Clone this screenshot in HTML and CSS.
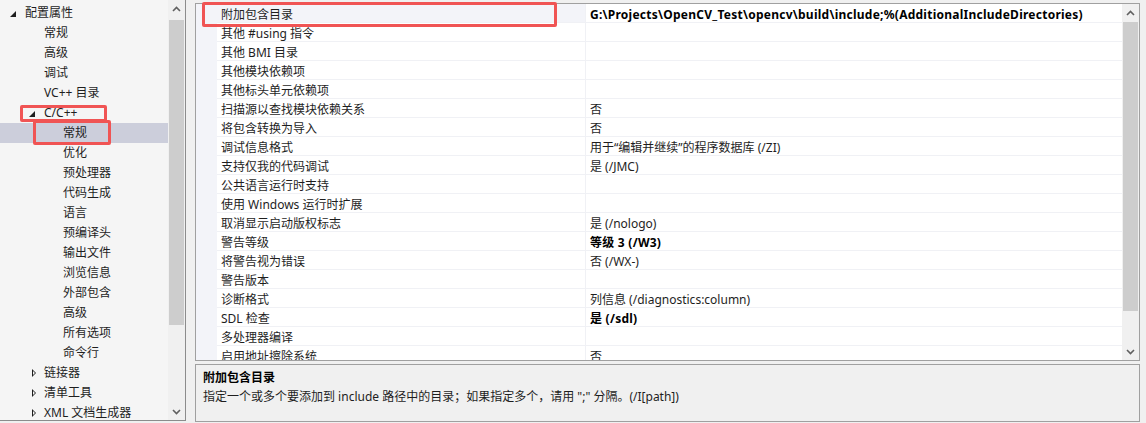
FILE: index.html
```html
<!DOCTYPE html>
<html lang="zh-CN">
<head>
    <meta charset="UTF-8">
    <title>C/C++ 常规</title>
    <link rel="stylesheet" href="styles.css">
</head>
<body>
    <div class="page">
        <div class="tree-panel">
            <div class="tree">
                <div class="node lv0"><span class="tog open"></span>配置属性</div>
                <div class="node lv1"><span class="tog"></span>常规</div>
                <div class="node lv1"><span class="tog"></span>高级</div>
                <div class="node lv1"><span class="tog"></span>调试</div>
                <div class="node lv1"><span class="tog"></span>VC++ 目录</div>
                <div class="node lv1"><span class="tog open"></span>C/C++</div>
                <div class="node lv2 sel"><span class="tog"></span>常规</div>
                <div class="node lv2"><span class="tog"></span>优化</div>
                <div class="node lv2"><span class="tog"></span>预处理器</div>
                <div class="node lv2"><span class="tog"></span>代码生成</div>
                <div class="node lv2"><span class="tog"></span>语言</div>
                <div class="node lv2"><span class="tog"></span>预编译头</div>
                <div class="node lv2"><span class="tog"></span>输出文件</div>
                <div class="node lv2"><span class="tog"></span>浏览信息</div>
                <div class="node lv2"><span class="tog"></span>外部包含</div>
                <div class="node lv2"><span class="tog"></span>高级</div>
                <div class="node lv2"><span class="tog"></span>所有选项</div>
                <div class="node lv2"><span class="tog"></span>命令行</div>
                <div class="node lv1"><span class="tog closed"></span>链接器</div>
                <div class="node lv1"><span class="tog closed"></span>清单工具</div>
                <div class="node lv1"><span class="tog closed"></span>XML 文档生成器</div>
            </div>
            <div class="vscroll tree-scroll">
                <div class="arrow"><svg width="9" height="6" viewBox="0 0 9 6"><polyline points="1,5 4.5,1.5 8,5" /></svg></div>
                <div class="track"><div class="thumb"></div></div>
                <div class="arrow"><svg width="9" height="6" viewBox="0 0 9 6"><polyline points="1,1 4.5,4.5 8,1" /></svg></div>
            </div>
        </div>

        <div class="right">
            <div class="grid">
                <div class="rows">
                    <div class="row sel"><div class="gutter"></div><div class="name">附加包含目录</div><div class="val b">G:\Projects\OpenCV_Test\opencv\build\include;%(AdditionalIncludeDirectories)</div></div>
                    <div class="row"><div class="gutter"></div><div class="name">其他 #using 指令</div><div class="val"></div></div>
                    <div class="row"><div class="gutter"></div><div class="name">其他 BMI 目录</div><div class="val"></div></div>
                    <div class="row"><div class="gutter"></div><div class="name">其他模块依赖项</div><div class="val"></div></div>
                    <div class="row"><div class="gutter"></div><div class="name">其他标头单元依赖项</div><div class="val"></div></div>
                    <div class="row"><div class="gutter"></div><div class="name">扫描源以查找模块依赖关系</div><div class="val">否</div></div>
                    <div class="row"><div class="gutter"></div><div class="name">将包含转换为导入</div><div class="val">否</div></div>
                    <div class="row"><div class="gutter"></div><div class="name">调试信息格式</div><div class="val">用于“编辑并继续”的程序数据库 (/ZI)</div></div>
                    <div class="row"><div class="gutter"></div><div class="name">支持仅我的代码调试</div><div class="val">是 (/JMC)</div></div>
                    <div class="row"><div class="gutter"></div><div class="name">公共语言运行时支持</div><div class="val"></div></div>
                    <div class="row"><div class="gutter"></div><div class="name">使用 Windows 运行时扩展</div><div class="val"></div></div>
                    <div class="row"><div class="gutter"></div><div class="name">取消显示启动版权标志</div><div class="val">是 (/nologo)</div></div>
                    <div class="row"><div class="gutter"></div><div class="name">警告等级</div><div class="val b">等级 3 (/W3)</div></div>
                    <div class="row"><div class="gutter"></div><div class="name">将警告视为错误</div><div class="val">否 (/WX-)</div></div>
                    <div class="row"><div class="gutter"></div><div class="name">警告版本</div><div class="val"></div></div>
                    <div class="row"><div class="gutter"></div><div class="name">诊断格式</div><div class="val">列信息 (/diagnostics:column)</div></div>
                    <div class="row"><div class="gutter"></div><div class="name">SDL 检查</div><div class="val b">是 (/sdl)</div></div>
                    <div class="row"><div class="gutter"></div><div class="name">多处理器编译</div><div class="val"></div></div>
                    <div class="row"><div class="gutter"></div><div class="name">启用地址擦除系统</div><div class="val">否</div></div>
                </div>
                <div class="vscroll grid-scroll">
                    <div class="arrow"><svg width="9" height="6" viewBox="0 0 9 6"><polyline points="1,5 4.5,1.5 8,5" /></svg></div>
                    <div class="track"><div class="thumb"></div></div>
                    <div class="arrow"><svg width="9" height="6" viewBox="0 0 9 6"><polyline points="1,1 4.5,4.5 8,1" /></svg></div>
                </div>
            </div>
            <div class="desc">
                <div class="desc-title">附加包含目录</div>
                <div class="desc-text">指定一个或多个要添加到 include 路径中的目录；如果指定多个，请用 ";" 分隔。(/I[path])</div>
            </div>
        </div>

        <!-- red annotation boxes -->
        <div class="mark mark-row"></div>
        <div class="mark mark-cpp"></div>
        <div class="mark mark-gen"></div>
    </div>
</body>
</html>
```

FILE: styles.css
```css
body {
    margin: 0;
    background-color: #f0f0f0;
    font-family: "Noto Sans", "Noto Sans CJK SC", sans-serif;
    font-size: 12px;
    color: #1e1e1e;
    overflow: hidden;
}

.page {
    position: relative;
    display: flex;
    width: 1146px;
    height: 423px;
}

/* left tree */
.tree-panel {
    width: 185px;
    height: 420px;
    display: flex;
    background-color: #f5f5f5;
    border-right: 1px solid #8c8c8c;
    border-bottom: 1px solid #8c8c8c;
}

.tree {
    flex: 1;
    padding-top: 3px;
    overflow: hidden;
}

.node {
    display: flex;
    align-items: center;
    height: 20px;
    line-height: 20px;
    white-space: nowrap;
}

.node.lv0 { padding-left: 6px; }
.node.lv1 { padding-left: 25px; }
.node.lv2 { padding-left: 44px; }

.node.sel {
    background-color: #cccedb;
}

.tog {
    width: 19px;
    height: 20px;
    flex: none;
    position: relative;
}

.tog.open::after {
    content: "";
    position: absolute;
    left: 4px;
    top: 8px;
    border-left: 6px solid transparent;
    border-bottom: 6px solid #1e1e1e;
}

.tog.closed::after {
    content: "";
    position: absolute;
    left: 7px;
    top: 6px;
    width: 0;
    height: 0;
    border-top: 4px solid transparent;
    border-bottom: 4px solid transparent;
    border-left: 4px solid #1e1e1e;
}

.tog.closed::before {
    content: "";
    position: absolute;
    left: 8px;
    top: 8px;
    width: 0;
    height: 0;
    border-top: 2px solid transparent;
    border-bottom: 2px solid transparent;
    border-left: 2px solid #f5f5f5;
    z-index: 1;
}

/* scrollbars */
.vscroll {
    width: 17px;
    flex: none;
    display: flex;
    flex-direction: column;
    background-color: #f0f0f0;
}

.vscroll .arrow {
    height: 17px;
    display: flex;
    align-items: center;
    justify-content: center;
}

.vscroll svg polyline {
    fill: none;
    stroke: #606060;
    stroke-width: 1.6;
}

.vscroll .track {
    flex: 1;
    padding: 0 1px;
}

.vscroll .thumb {
    background-color: #cdcdcd;
}

.tree-scroll .thumb {
    margin-top: 3px;
    height: 305px;
}

.grid-scroll .thumb {
    margin-top: 1px;
    height: 289px;
}

/* right side */
.right {
    margin-left: 9px;
    padding-top: 3px;
    width: 945px;
    display: flex;
    flex-direction: column;
    gap: 3px;
}

.grid {
    height: 356px;
    flex: none;
    display: flex;
    background-color: #ffffff;
    border: 1px solid #a0a0a0;
}

.rows {
    flex: 1;
    overflow: hidden;
}

.row {
    display: flex;
    height: 19px;
}

.gutter {
    width: 21px;
    flex: none;
    background-color: #f3f4f9;
}

.name, .val {
    box-sizing: border-box;
    height: 19px;
    padding-top: 3px;
    line-height: 15px;
    padding-left: 4px;
    border-bottom: 1px solid #f0f1f5;
    white-space: nowrap;
    overflow: hidden;
}

.name {
    width: 369px;
    flex: none;
    border-right: 1px solid #f0f1f5;
}

.val {
    flex: 1;
}

.val.b {
    letter-spacing: 0.25px;
}

.row.sel .name {
    background-color: #f3f4f9;
}

.b {
    font-weight: bold;
    color: #000000;
}

.desc {
    border: 1px solid #a0a0a0;
    background-color: #f0f0f0;
    padding: 3px 7px;
    box-sizing: border-box;
    height: 58px;
    flex: none;
    line-height: 19px;
}

.desc-title {
    font-weight: bold;
    color: #000000;
}

/* annotation boxes */
.mark {
    position: absolute;
    border: 3px solid #f05454;
    border-radius: 2px;
    box-sizing: border-box;
}

.mark-row {
    left: 202px;
    top: 2px;
    width: 355px;
    height: 25px;
}

.mark-cpp {
    left: 20px;
    top: 105px;
    width: 87px;
    height: 17px;
}

.mark-gen {
    left: 33px;
    top: 120px;
    width: 78px;
    height: 25px;
}
```
